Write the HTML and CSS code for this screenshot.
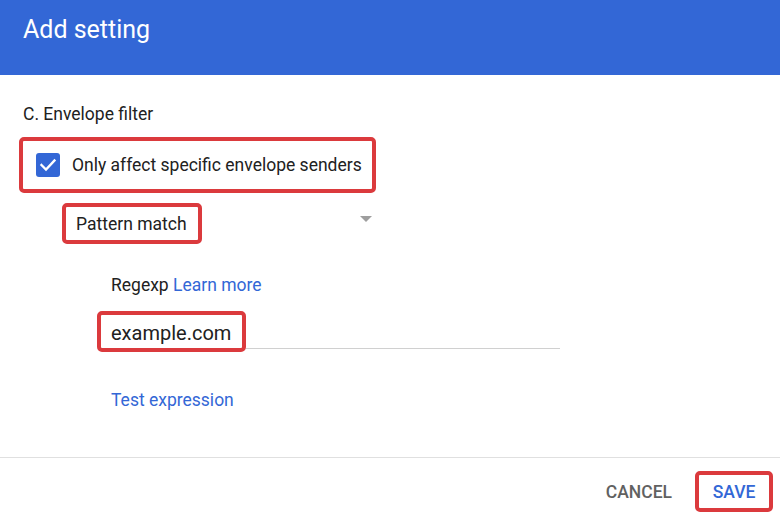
FILE: index.html
```html
<!DOCTYPE html>
<html>
<head>
<meta charset="utf-8">
<link rel="stylesheet" href="styles.css">
</head>
<body>
<div class="dialog">
  <header class="header">
    <h1 class="title">Add setting</h1>
  </header>
  <main class="content">
    <div class="section-label">C. Envelope filter</div>
    <div class="check-row highlight">
      <span class="checkbox">
        <svg viewBox="0 0 24 24" width="24" height="24"><polyline points="5.5,12 10,16.5 18.5,7.5" fill="none" stroke="#fff" stroke-width="2.3" stroke-linecap="square"/></svg>
      </span>
      <span class="check-text">Only affect specific envelope senders</span>
    </div>
    <div class="select-row">
      <div class="select-value highlight">Pattern match</div>
      <span class="caret"></span>
    </div>
    <div class="regexp">
      <div class="regexp-label">Regexp <a class="link">Learn more</a></div>
      <div class="input-row">
        <div class="input-value highlight">example.com</div>
        <div class="input-line"></div>
      </div>
      <div class="test-link link">Test expression</div>
    </div>
  </main>
  <footer class="footer">
    <button class="btn btn-cancel">CANCEL</button>
    <button class="btn btn-save highlight">SAVE</button>
  </footer>
</div>
</body>
</html>
```
FILE: styles.css
```css
* { box-sizing: border-box; }
html, body { margin: 0; padding: 0; background: #fff; }
body {
  font-family: Roboto, "Noto Sans", Arial, sans-serif;
  color: #212121;
  width: 780px;
  height: 519px;
  overflow: hidden;
}
.header {
  height: 75px;
  background: #3367d6;
  padding: 15px 0 0 23px;
}
.title {
  margin: 0;
  font-size: 25px;
  line-height: 30px;
  font-weight: 400;
  color: #fff;
}
.content {
  height: 382px;
  padding: 29px 0 0 23px;
}
.highlight {
  border: 4px solid #db3a3d;
  border-radius: 5px;
}
.section-label {
  font-size: 17.5px;
  line-height: 20px;
  height: 20px;
}
.check-row {
  margin: 13px 0 0 -4px;
  width: 357px;
  height: 56px;
  display: flex;
  align-items: center;
  padding-left: 13px;
  gap: 12px;
}
.checkbox {
  width: 24px;
  height: 24px;
  background: #3367d6;
  border-radius: 3px;
  display: flex;
}
.check-text {
  font-size: 17.5px;
}
.select-row {
  margin: 10px 0 0 39px;
  width: 310px;
  display: flex;
  justify-content: space-between;
  align-items: flex-start;
}
.select-value {
  width: 140px;
  height: 41px;
  padding-left: 10px;
  display: flex;
  align-items: center;
  font-size: 17.5px;
}
.caret {
  margin-top: 13px;
  width: 0;
  height: 0;
  border-left: 6px solid transparent;
  border-right: 6px solid transparent;
  border-top: 6px solid #9e9e9e;
}
.regexp {
  margin-left: 74px;
}
.regexp-label {
  margin-top: 31px;
  font-size: 17.5px;
  line-height: 20px;
  margin-left: 14px;
}
.link {
  color: #3367d6;
  text-decoration: none;
}
.input-row {
  margin-top: 16px;
  display: flex;
  align-items: flex-start;
  width: 463px;
}
.input-value {
  width: 149px;
  height: 41px;
  padding: 2px 0 0 10px;
  display: flex;
  align-items: center;
  font-size: 20px;
}
.input-line {
  flex: 1;
  height: 38px;
  border-bottom: 1px solid #d0d0d0;
}
.test-link {
  margin: 38px 0 0 14px;
  font-size: 17.5px;
  line-height: 20px;
}
.footer {
  border-top: 1px solid #e0e0e0;
  display: flex;
  justify-content: flex-end;
  align-items: flex-start;
  padding: 13px 7px 0 0;
  gap: 23px;
}
.btn {
  font-family: Roboto, "Noto Sans", Arial, sans-serif;
  font-size: 17.5px;
  font-weight: 500;
  background: none;
  border: none;
  padding: 0;
  height: 41px;
  cursor: pointer;
}
.btn-cancel {
  color: #616161;
}
.btn-save {
  color: #3367d6;
  width: 78px;
  border: 4px solid #db3a3d;
}
```
